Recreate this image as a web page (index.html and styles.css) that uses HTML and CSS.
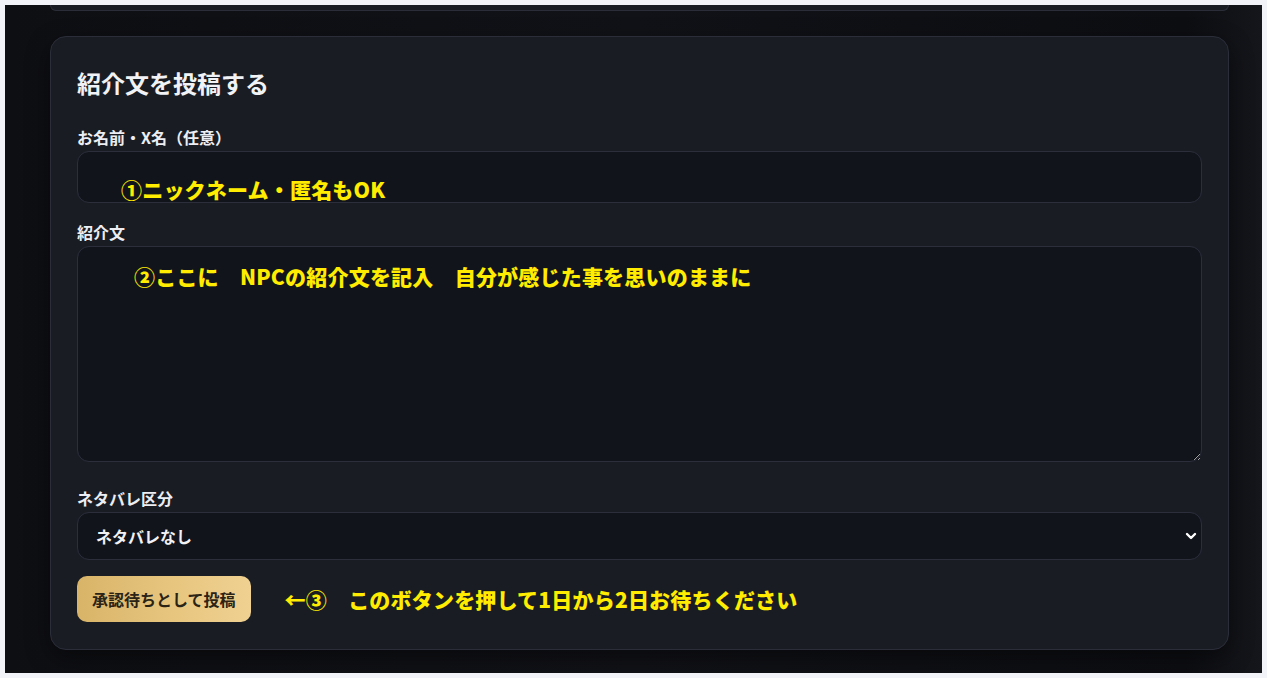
FILE: index.html
```html
<!DOCTYPE html>
<html lang="ja">
<head>
<meta charset="utf-8">
<title>紹介文を投稿する</title>
<link rel="stylesheet" href="styles.css">
</head>
<body>
<div class="page">
  <div class="prev-card"></div>
  <section class="card">
    <h2 class="card-title">紹介文を投稿する</h2>
    <form class="form">
      <label class="label" for="name">お名前・X名（任意）</label>
      <div class="field-wrap">
        <input class="input" id="name" type="text">
        <span class="note note-name">①ニックネーム・匿名もOK</span>
      </div>

      <label class="label" for="body">紹介文</label>
      <div class="field-wrap">
        <textarea class="textarea" id="body"></textarea>
        <span class="note note-body">②ここに　NPCの紹介文を記入　自分が感じた事を思いのままに</span>
      </div>

      <label class="label label-spoiler" for="spoiler">ネタバレ区分</label>
      <div class="field-wrap">
        <select class="select" id="spoiler">
          <option>ネタバレなし</option>
        </select>
        <svg class="chevron" width="12" height="8" viewBox="0 0 12 8" aria-hidden="true">
          <path d="M2 2 L6 6 L10 2" fill="none" stroke="#ffffff" stroke-width="2.4" stroke-linecap="round" stroke-linejoin="round"/>
        </svg>
      </div>

      <div class="actions">
        <button class="btn" type="button">承認待ちとして投稿</button>
        <span class="note-inline">←③　このボタンを押して1日から2日お待ちください</span>
      </div>
    </form>
  </section>
</div>
</body>
</html>
```

FILE: styles.css
```css
html {
  background: #f1f3f8;
}
body {
  margin: 5px;
  font-family: "Noto Sans CJK JP", "Noto Sans", sans-serif;
}
.page {
  height: 668px;
  overflow: hidden;
  box-sizing: border-box;
  padding: 0 33px 0 45px;
  background: linear-gradient(90deg, #0e0f13 0%, #111217 50%, #0d0e12 94%, #15161b 100%);
}
.prev-card {
  height: 5px;
  background: #1a1c24;
  border: 1px solid #2b2e39;
  border-top: none;
  border-radius: 0 0 16px 16px;
}
.card {
  margin-top: 25px;
  background: #1a1c24;
  border: 1px solid #2b2e39;
  border-radius: 16px;
  padding: 28px 26px 27px;
  box-shadow: 0 8px 24px rgba(0, 0, 0, 0.45);
}
.card-title {
  margin: 0 0 25px;
  font-size: 24px;
  line-height: 36px;
  font-weight: 700;
  color: #f1f2f5;
}
.form {
  display: flex;
  flex-direction: column;
}
.label {
  display: block;
  font-size: 16px;
  line-height: 22px;
  font-weight: 700;
  color: #eceef3;
  margin-bottom: 3px;
}
.field-wrap {
  position: relative;
}
.input,
.textarea,
.select {
  display: block;
  box-sizing: border-box;
  width: 100%;
  background: #12141b;
  border: 1px solid #2c2f3b;
  border-radius: 12px;
  color: #f1f2f5;
  font-family: inherit;
  font-size: 16px;
  outline: none;
}
.input {
  height: 52px;
  padding: 0 18px;
  margin-bottom: 18px;
}
.textarea {
  height: 216px;
  padding: 12px 18px;
  resize: vertical;
  margin-bottom: 25px;
}
.select {
  height: 48px;
  padding: 0 18px;
  font-weight: 700;
  appearance: none;
  -webkit-appearance: none;
  margin-bottom: 16px;
}
.chevron {
  position: absolute;
  right: 5px;
  top: 20px;
  pointer-events: none;
}
.note,
.note-inline {
  font-family: "Noto Sans CJK JP", sans-serif;
  font-weight: 900;
  font-size: 21px;
  line-height: 1;
  letter-spacing: 0.2px;
  color: #ffec00;
  white-space: nowrap;
}
.note {
  position: absolute;
  pointer-events: none;
}
.note-name {
  left: 44px;
  top: 28px;
}
.note-body {
  left: 57px;
  top: 20px;
}
.actions {
  display: flex;
  align-items: center;
  gap: 34px;
}
.btn {
  height: 46px;
  padding: 0 15px;
  border: none;
  border-radius: 10px;
  background: linear-gradient(90deg, #d8b468 0%, #e6c47d 50%, #f0d191 100%);
  color: #2a2316;
  font-family: inherit;
  font-size: 16px;
  font-weight: 700;
  cursor: pointer;
}
```
